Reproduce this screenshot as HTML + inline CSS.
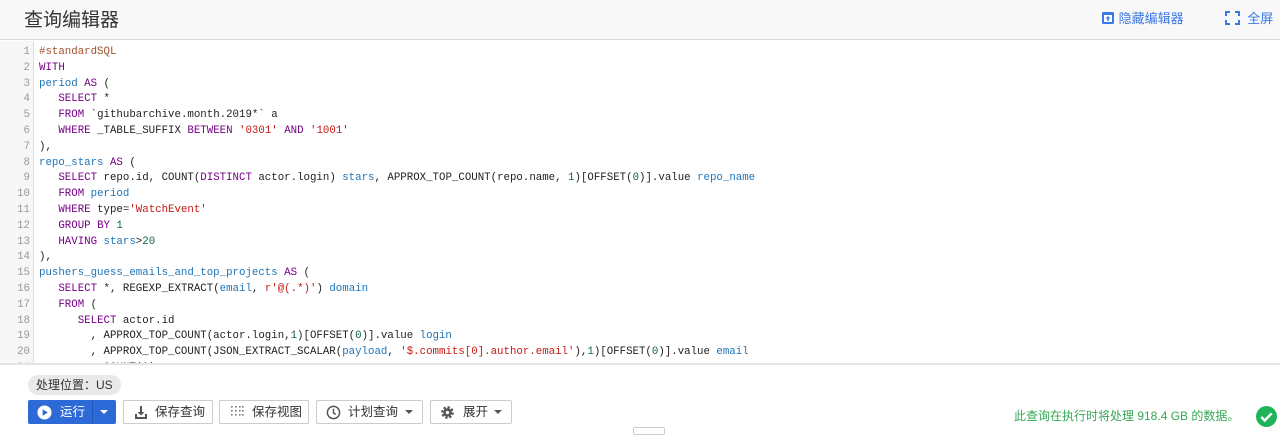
<!DOCTYPE html><html><head><meta charset="utf-8"><style>
*{margin:0;padding:0;box-sizing:border-box}
body{width:1280px;height:432px;overflow:hidden;background:#fff;font-family:"Liberation Sans","Noto Sans CJK SC",sans-serif;position:relative}
.hdr{position:absolute;left:0;top:0;width:1280px;height:40px;background:#f8f8f8;border-bottom:1px solid #dadada}
.hdr .t{position:absolute;left:24px;top:5px;font-size:19px;color:#333}
.lk{position:absolute;top:8px;font-size:13px;color:#3b78e7}
.ed{position:absolute;left:0;top:41px;width:1280px;height:324px;border-bottom:2px solid #e4e4e4;overflow:hidden}
.gut{position:absolute;left:0;top:0;width:34px;height:100%;background:#f7f7f7;border-right:1px solid #ddd}
pre{position:absolute;top:4px;font-family:"Liberation Mono",monospace;font-size:10.75px;line-height:15.8px;color:#222}
.ln{left:0;width:30px;text-align:right;color:#999}
.cd{left:39px}
.k{color:#708}.v{color:#1f74b7}.s{color:#c41a16}.n{color:#164}.c{color:#a0522d}
.pill{position:absolute;left:28px;top:375px;height:20px;padding:0 8px;border-radius:10px;background:#e9e9e9;font-size:12px;line-height:20px;color:#333}
.btn{position:absolute;top:400px;height:24px;border:1px solid #ccc;border-radius:2px;background:#fff;font-size:12.5px;color:#333;line-height:22px}
.run{left:28px;width:88px;background:#2d6ad8;border-color:#2d6ad8;color:#fff}
.ok{position:absolute;left:1014px;top:407px;font-size:12px;color:#34a853}
</style></head><body>
<div class="hdr"><div class="t">查询编辑器</div>
<div class="lk" style="left:1101px"><svg width="14" height="14" viewBox="0 0 14 14" style="vertical-align:-2px"><rect x="1" y="1" width="12" height="12" rx="1.5" fill="#3b78e7"/><rect x="3" y="4" width="8" height="7" fill="#fff"/><path d="M7 5l-2.5 2.5h1.7V10h1.6V7.5h1.7z" fill="#3b78e7"/></svg> 隐藏编辑器</div>
<div class="lk" style="left:1225px"><svg width="15" height="14" viewBox="0 0 15 14" style="vertical-align:-2px" fill="none" stroke="#3b78e7" stroke-width="2"><path d="M1 5V1h4M10 1h4v4M14 9v4h-4M5 13H1V9"/></svg> &nbsp;全屏</div></div>
<div class="ed"><div class="gut"></div>
<pre class="ln">1
2
3
4
5
6
7
8
9
10
11
12
13
14
15
16
17
18
19
20
21</pre>
<pre class="cd"><span class="c">#standardSQL</span>
<span class="k">WITH</span>
<span class="v">period</span> <span class="k">AS</span> (
   <span class="k">SELECT</span> *
   <span class="k">FROM</span> `githubarchive.month.2019*` a
   <span class="k">WHERE</span> _TABLE_SUFFIX <span class="k">BETWEEN</span> <span class="s">'0301'</span> <span class="k">AND</span> <span class="s">'1001'</span>
),
<span class="v">repo_stars</span> <span class="k">AS</span> (
   <span class="k">SELECT</span> repo.id, COUNT(<span class="k">DISTINCT</span> actor.login) <span class="v">stars</span>, APPROX_TOP_COUNT(repo.name, <span class="n">1</span>)[OFFSET(<span class="n">0</span>)].value <span class="v">repo_name</span>
   <span class="k">FROM</span> <span class="v">period</span>
   <span class="k">WHERE</span> type=<span class="s">'WatchEvent'</span>
   <span class="k">GROUP BY</span> <span class="n">1</span>
   <span class="k">HAVING</span> <span class="v">stars</span>&gt;<span class="n">20</span>
),
<span class="v">pushers_guess_emails_and_top_projects</span> <span class="k">AS</span> (
   <span class="k">SELECT</span> *, REGEXP_EXTRACT(<span class="v">email</span>, <span class="s">r'@(.*)'</span>) <span class="v">domain</span>
   <span class="k">FROM</span> (
      <span class="k">SELECT</span> actor.id
        , APPROX_TOP_COUNT(actor.login,<span class="n">1</span>)[OFFSET(<span class="n">0</span>)].value <span class="v">login</span>
        , APPROX_TOP_COUNT(JSON_EXTRACT_SCALAR(<span class="v">payload</span>, <span class="s">'$.commits[0].author.email'</span>),<span class="n">1</span>)[OFFSET(<span class="n">0</span>)].value <span class="v">email</span>
        , COUNT(*) c</pre></div>
<div class="pill">处理位置：US</div>
<div class="btn run"><svg width="15" height="15" viewBox="0 0 16 16" style="position:absolute;left:8px;top:4px"><circle cx="8" cy="8" r="7.5" fill="#fff"/><path d="M6 4.5v7l5.5-3.5z" fill="#2d6ad8"/></svg><span style="position:absolute;left:31px">运行</span><span style="position:absolute;left:63px;top:0;height:22px;border-left:1px solid #1f56b8"></span><svg width="8" height="5" style="position:absolute;left:71px;top:9px"><path d="M0 0h8L4 4z" fill="#fff"/></svg></div>
<div class="btn" style="left:123px;width:90px"><svg width="14" height="14" viewBox="0 0 14 14" style="position:absolute;left:10px;top:4px" fill="#555"><path d="M6 1h2v6h2.5L7 10.5 3.5 7H6z"/><path d="M1 9h2v3h8V9h2v5H1z"/></svg><span style="position:absolute;left:31px">保存查询</span></div>
<div class="btn" style="left:219px;width:90px"><svg width="14" height="14" viewBox="0 0 14 14" style="position:absolute;left:10px;top:4px" fill="#777"><g><rect x="1" y="1" width="1.6" height="1.6"/><rect x="5" y="1" width="1.6" height="1.6"/><rect x="9" y="1" width="1.6" height="1.6"/><rect x="1" y="5" width="1.6" height="1.6"/><rect x="5" y="5" width="1.6" height="1.6"/><rect x="9" y="5" width="1.6" height="1.6"/><rect x="1" y="9" width="1.6" height="1.6"/><rect x="5" y="9" width="1.6" height="1.6"/><rect x="9" y="9" width="1.6" height="1.6"/><rect x="12" y="1" width="1.6" height="1.6"/><rect x="12" y="5" width="1.6" height="1.6"/><rect x="12" y="9" width="1.6" height="1.6"/></g></svg><span style="position:absolute;left:32px">保存视图</span></div>
<div class="btn" style="left:316px;width:107px"><svg width="15" height="15" viewBox="0 0 16 16" style="position:absolute;left:9px;top:4px" fill="none" stroke="#555" stroke-width="1.6"><circle cx="8" cy="8" r="6.5"/><path d="M8 4v4.5l2.5 1.5"/></svg><span style="position:absolute;left:31px">计划查询</span><svg width="8" height="5" style="position:absolute;left:88px;top:9px"><path d="M0 0h8L4 4z" fill="#555"/></svg></div>
<div class="btn" style="left:430px;width:82px"><svg width="15" height="15" viewBox="0 0 16 16" style="position:absolute;left:9px;top:4px"><circle cx="8" cy="8" r="5" fill="none" stroke="#555" stroke-width="3.5" stroke-dasharray="2.2 1.7"/><circle cx="8" cy="8" r="4.5" fill="#555"/><circle cx="8" cy="8" r="1.8" fill="#fff"/></svg><span style="position:absolute;left:32px">展开</span><svg width="8" height="5" style="position:absolute;left:63px;top:9px"><path d="M0 0h8L4 4z" fill="#555"/></svg></div>
<div class="ok">此查询在执行时将处理 918.4 GB 的数据。</div>
<svg width="21" height="21" viewBox="0 0 20 20" style="position:absolute;left:1256px;top:406px"><circle cx="10" cy="10" r="10" fill="#1fb45a"/><path d="M5 10.5l3.3 3.3L15 7" stroke="#fff" stroke-width="2.4" fill="none"/></svg>
<div style="position:absolute;left:633px;top:427px;width:32px;height:8px;border:1px solid #ccc;border-radius:2px"></div>
</body></html>
